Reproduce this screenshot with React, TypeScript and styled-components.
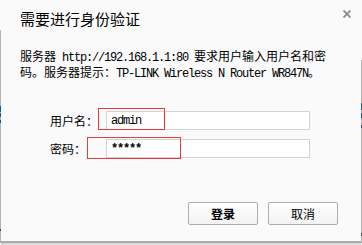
import styled, { createGlobalStyle } from 'styled-components';

const GlobalStyle = createGlobalStyle`
	html, body {
		margin: 0;
		padding: 0;
		background: #fafafa;
	}
	body {
		width: 362px;
		height: 245px;
		overflow: hidden;
		font-family: "Noto Sans CJK SC", sans-serif;
		color: #000;
	}
`;

const Page = styled.div`
	display: flex;
	width: 362px;
	height: 245px;
	background: #f2f2f2;
`;

// the 1px strips of the page behind the dialog, with a few marks of its content
const Edge = styled.div<{ $marks: string }>`
	flex: none;
	width: 1px;
	height: 243px;
	background: ${(p) => p.$marks};
`;

const Dialog = styled.div`
	flex: none;
	width: 360px;
	height: 241px;
	display: flex;
	flex-direction: column;
	background: #fafafa;
	border-bottom: 2px solid #ababab;
	box-shadow: 0 2px 0 #dadada;
`;

const Header = styled.div`
	display: flex;
	justify-content: space-between;
	align-items: flex-start;
	padding: 9px 10px 0 19px;
`;

const Title = styled.h1`
	margin: 0;
	font-size: 15px;
	line-height: 20px;
	font-weight: normal;
`;

const Close = styled.button`
	margin-top: 1px;
	padding: 0;
	width: 8px;
	height: 8px;
	border: 0;
	background: none;
	display: flex;
`;

const Message = styled.p`
	margin: 20px 0 0;
	padding-left: 19px;
	font-size: 12px;
	line-height: 13px;
`;

const Line = styled.span`
	display: block;
	white-space: pre;
`;

const Latin = styled.span<{ $bold?: boolean }>`
	font-family: "Liberation Mono", monospace;
	font-size: 12px;
	letter-spacing: -1.2px;
	font-weight: ${(p) => (p.$bold ? 700 : 400)};
`;

const Form = styled.div`
	display: flex;
	flex-direction: column;
	gap: 9px;
	margin-top: 30px;
	padding-left: 49px;
`;

const Row = styled.div`
	display: flex;
	align-items: center;
`;

const Label = styled.label`
	width: 56px;
	font-size: 12px;
`;

const Field = styled.div`
	position: relative;
	box-sizing: border-box;
	width: 204px;
	height: 19px;
	display: flex;
	align-items: center;
	padding-left: 4px;
	border: 1px solid #d3d3d3;
	background: #fff;
`;

// red rectangle drawn over the screenshot
const Highlight = styled.span<{ $left: number; $top: number; $width: number }>`
	position: absolute;
	left: ${(p) => p.$left}px;
	top: ${(p) => p.$top}px;
	width: ${(p) => p.$width}px;
	height: 22px;
	box-sizing: border-box;
	border: 1px solid #e63a3c;
	pointer-events: none;
`;

const Footer = styled.div`
	display: flex;
	justify-content: flex-end;
	gap: 10px;
	margin-top: 44px;
	padding-right: 23px;
`;

const Button = styled.button<{ $primary?: boolean }>`
	width: 70px;
	height: 23px;
	padding: 0;
	border: 1px solid #adadad;
	border-radius: 2px;
	background: linear-gradient(#fefefe, #f3f3f3);
	font-family: "Noto Sans CJK SC", sans-serif;
	font-size: 12px;
	font-weight: ${(p) => (p.$primary ? 700 : 400)};
	color: #000;
`;

const leftMarks =
	'linear-gradient(to bottom, #fafafa 0 30px, #b4b4b4 30px 106px, #135a9c 106px 112px, #b4b4b4 112px 113px, #135a9c 113px 117px, #b4b4b4 117px 120px, #135a9c 120px 123px, #b4b4b4 123px 229px, #444 229px 231px, #b4b4b4 231px)';
const rightMarks =
	'linear-gradient(to bottom, #fafafa 0 60px, #b4b4b4 60px 103px, #135a9c 103px 110px, #b4b4b4 110px 113px, #135a9c 113px 118px, #b4b4b4 118px 125px, #135a9c 125px 128px, #b4b4b4 128px 233px, #555 233px 236px, #b4b4b4 236px)';

function App() {
	return (
		<>
			<GlobalStyle />
			<Page>
				<Edge $marks={leftMarks} />
				<Dialog>
					<Header>
						<Title>需要进行身份验证</Title>
						<Close aria-label="关闭">
							<svg width="8" height="8" viewBox="0 0 8 8">
								<path d="M0.5 0.5L7.5 7.5M7.5 0.5L0.5 7.5" stroke="#8a8a8a" strokeWidth="1.8" />
							</svg>
						</Close>
					</Header>
					<Message>
						<Line>
							服务器<Latin> http://192.168.1.1:80 </Latin>要求用户输入用户名和密
						</Line>
						<Line>
							码。服务器提示：<Latin>TP-LINK Wireless N Router WR847N</Latin>。
						</Line>
					</Message>
					<Form>
						<Row>
							<Label>用户名：</Label>
							<Field>
								<Latin>admin</Latin>
								<Highlight $left={-9} $top={-4} $width={67} />
							</Field>
						</Row>
						<Row>
							<Label>密码：</Label>
							<Field>
								<Latin $bold>*****</Latin>
								<Highlight $left={-20} $top={-3} $width={94} />
							</Field>
						</Row>
					</Form>
					<Footer>
						<Button $primary>登录</Button>
						<Button>取消</Button>
					</Footer>
				</Dialog>
				<Edge $marks={rightMarks} />
			</Page>
		</>
	);
}

export default App;
